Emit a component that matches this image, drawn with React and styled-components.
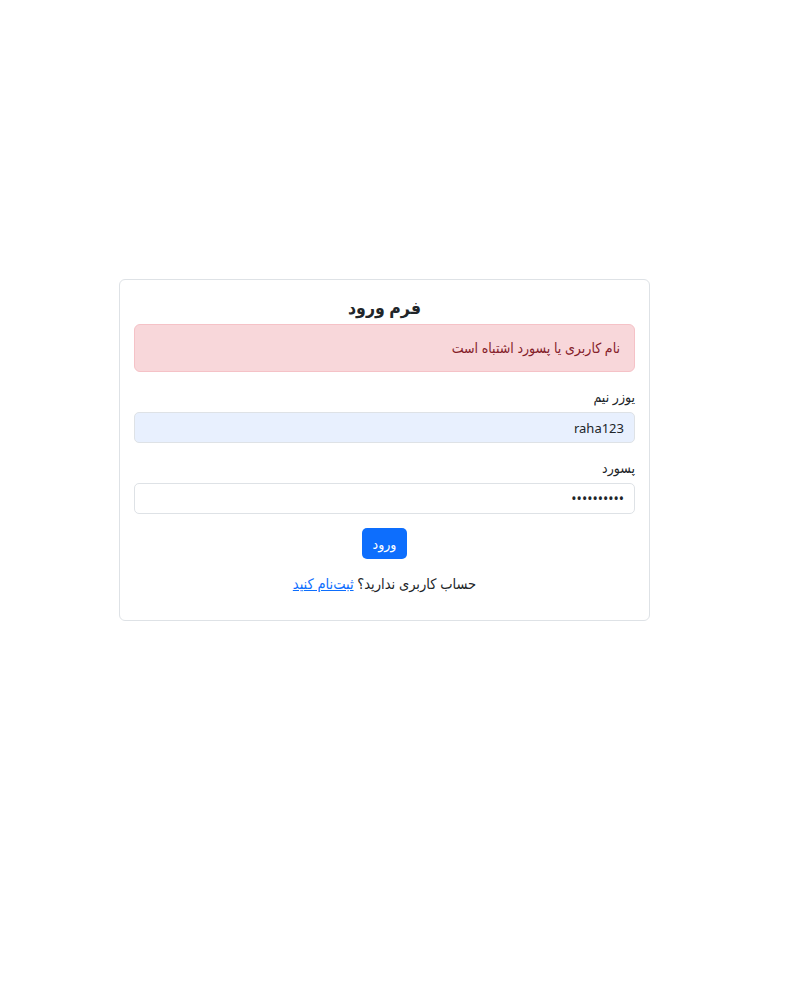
import React from "react";
import styled, { createGlobalStyle } from "styled-components";

const Global = createGlobalStyle`
  body {
    margin: 0;
    background: #fff;
    font-family: "Noto Sans", "DejaVu Sans Condensed", "DejaVu Sans", sans-serif;
    color: #212529;
  }
`;

const Page = styled.div`
  padding: 279px 0 0 119px;
`;

const Card = styled.form`
  box-sizing: border-box;
  width: 531px;
  padding: 15px 14px 16px;
  border: 1px solid #dee2e6;
  border-radius: 6px;
  direction: rtl;
`;

const Title = styled.h3`
  margin: 0 0 5px;
  text-align: center;
  font-size: 17.5px;
  font-weight: 700;
  line-height: 24px;
`;

const Alert = styled.div`
  box-sizing: border-box;
  height: 48px;
  padding: 11px 14px 13px;
  background: #f8d7da;
  border: 1px solid #f5c2c7;
  border-radius: 6px;
  color: #842029;
  font-size: 14px;
  line-height: 24px;
`;

const Group = styled.div`
  margin-top: 15px;
`;

const Label = styled.label`
  display: block;
  margin-bottom: 5px;
  font-size: 14px;
  line-height: 20px;
`;

const Input = styled.input`
  box-sizing: border-box;
  display: block;
  width: 100%;
  height: 31px;
  padding: 4px 10px;
  border: 1px solid #dee2e6;
  border-radius: 5px;
  background: ${(p) => (p.$filled ? "#e8f0fe" : "#fff")};
  font-family: "Noto Sans", sans-serif;
  font-size: ${(p) => (p.$filled ? "13px" : "14px")};
  color: #212529;
  direction: rtl;
  outline: none;
`;

const Actions = styled.div`
  display: flex;
  justify-content: center;
  margin-top: 14px;
`;

const Button = styled.button`
  height: 31px;
  width: 45px;
  padding: 0;
  border: none;
  border-radius: 5px;
  background: #0d6efd;
  color: #fff;
  font-family: inherit;
  font-size: 14px;
`;

const Note = styled.p`
  margin: 12px 0 9px;
  text-align: center;
  font-size: 14.5px;
  line-height: 24px;
`;

const Link = styled.a`
  color: #0d6efd;
  text-decoration: underline;
`;

export default function App() {
  return (
    <>
      <Global />
      <Page>
        <Card onSubmit={(e) => e.preventDefault()}>
          <Title>فرم ورود</Title>
          <Alert>نام کاربری یا پسورد اشتباه است</Alert>
          <Group>
            <Label>یوزر نیم</Label>
            <Input $filled readOnly value="raha123" />
          </Group>
          <Group>
            <Label>پسورد</Label>
            <Input type="password" readOnly value="1234567890" />
          </Group>
          <Actions>
            <Button type="submit">ورود</Button>
          </Actions>
          <Note>
            حساب کاربری ندارید؟ <Link href="#">ثبت‌نام کنید</Link>
          </Note>
        </Card>
      </Page>
    </>
  );
}
